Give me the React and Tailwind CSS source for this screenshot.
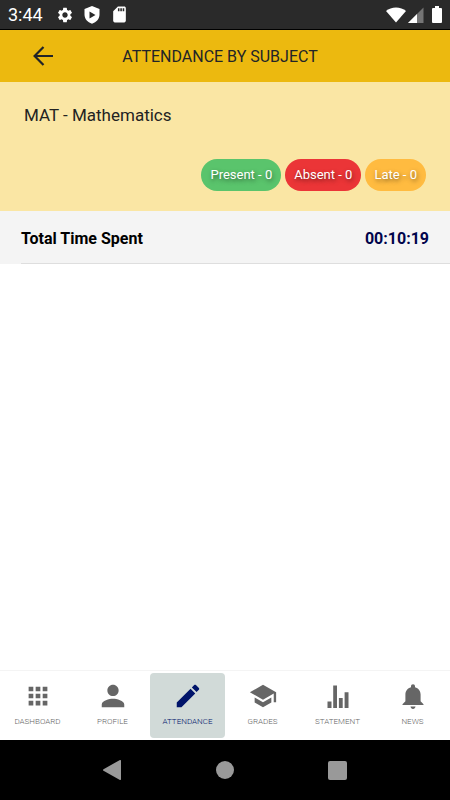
import React, { useState } from 'react';
import {
  IoMdApps,
  IoMdCreate,
  IoMdPerson,
  IoMdSchool,
} from 'react-icons/io';
import { MdSdCard, MdSettings } from 'react-icons/md';

const StatsIcon = ({ size }) => (
  <svg width={size} height={size} viewBox="0 0 30 30" fill="currentColor">
    <path d="M4.500 20.500h4V27h-4zM10.200 4.500h3.800V27h-3.800zM15.900 17h3.800v10h-3.800zM21.600 11.200h3.900V27h-3.900z" />
  </svg>
);

const BellIcon = ({ size }) => (
  <svg width={size} height={size} viewBox="0 0 30 30" fill="currentColor">
    <path d="M15 3.300c1.200 0 2 .9 2 2v.9c3.500.9 5.600 3.700 5.600 7.300v6.800l2.900 2.900v.8h-21v-.8l2.900-2.900v-6.800c0-3.600 2.100-6.400 5.600-7.300v-.9c0-1.100.8-2 2-2Z" />
    <path d="M12.500 25.600h5c-.2 1.500-1.200 2.400-2.500 2.400s-2.300-.9-2.500-2.400Z" />
  </svg>
);

const TABS = [
  { id: 'dashboard', label: 'DASHBOARD', Icon: IoMdApps },
  { id: 'profile', label: 'PROFILE', Icon: IoMdPerson },
  { id: 'attendance', label: 'ATTENDANCE', Icon: IoMdCreate },
  { id: 'grades', label: 'GRADES', Icon: IoMdSchool },
  { id: 'statement', label: 'STATEMENT', Icon: StatsIcon },
  { id: 'news', label: 'NEWS', Icon: BellIcon },
];

const COUNTS = [
  { label: 'Present', count: 0, color: 'bg-[#5ac46c]' },
  { label: 'Absent', count: 0, color: 'bg-[#eb3537]' },
  { label: 'Late', count: 0, color: 'bg-[#ffbb40]' },
];

const StatusBar = () => (
  <div className="flex h-[30px] items-center justify-between border-b border-black bg-[#2a2a2a] px-2 text-white">
    <div className="flex items-center">
      <span className="w-12 text-lg leading-none">3:44</span>
      <MdSettings size={18} />
      <svg className="ml-2 h-5 w-5" viewBox="0 0 20 20" fill="currentColor">
        <path fillRule="evenodd" d="M10 1 2.500 4v5.500c0 4.300 3 7.700 7.500 9.200 4.500-1.500 7.500-4.900 7.500-9.200V4L10 1Zm-2.500 5.500 6 3.500-6 3.500v-7Z" />
      </svg>
      <MdSdCard className="ml-2" size={19} />
    </div>
    <div className="flex items-center">
      <svg className="h-4 w-5" viewBox="0 0 20 16" fill="currentColor">
        <path d="M10 15.500 0 4C5-.7 15-.7 20 4L10 15.500Z" />
      </svg>
      <svg className="ml-0.5 h-4 w-4" viewBox="0 0 16 16" fill="currentColor">
        <path fill="#757575" d="M15.500.500V16H0L15.500.500Z" />
        <path d="M9 7v9H0l9-9Z" />
      </svg>
      <svg className="ml-2 h-[18px] w-[10px]" viewBox="0 0 10 18" fill="currentColor">
        <path d="M3 0h4v2h2a1 1 0 0 1 1 1v13a1 1 0 0 1-1 1H1a1 1 0 0 1-1-1V3a1 1 0 0 1 1-1h2V0Z" />
      </svg>
    </div>
  </div>
);

const Header = () => (
  <header className="grid h-[52px] grid-cols-[86px_1fr_96px] items-center bg-[#ecb90f] text-[#222428]">
    <button type="button" aria-label="Back" className="justify-self-center">
      <svg width="20" height="20" viewBox="0 0 20 20" fill="none" stroke="currentColor" strokeWidth="2.200">
        <path d="M10.500 1 1.600 10l8.900 9M1.600 10H20" />
      </svg>
    </button>
    <h1 className="pt-0.5 text-center text-base whitespace-nowrap">ATTENDANCE BY SUBJECT</h1>
  </header>
);

const Summary = () => (
  <section className="bg-[#fae6a4] px-6 pt-5 pb-5">
    <h2 className="text-[17px] leading-[26px] text-[#222]">MAT - Mathematics</h2>
    <div className="mt-[31px] flex justify-end gap-1">
      {COUNTS.map(({ label, count, color }) => (
        <span
          key={label}
          className={`flex h-8 items-center rounded-full px-[9px] text-[13px] text-white [text-shadow:1px_2px_4px_rgba(0,0,0,0.5)] ${color}`}
        >
          {label} - {count}
        </span>
      ))}
    </div>
  </section>
);

const TabBar = ({ active, onSelect }) => (
  <nav className="grid h-[70px] grid-cols-6 border-t border-[#f4f4f4] bg-white py-0.5">
    {TABS.map(({ id, label, Icon }) => (
      <button
        key={id}
        type="button"
        onClick={() => onSelect(id)}
        className={`flex flex-col items-center rounded-sm pt-2 ${
          active === id ? 'bg-[#d1dad8] text-[#00146a]' : 'text-[#666]'
        }`}
      >
        <Icon size={30} />
        <span className="mt-1 text-[8px] leading-[14px] font-light">{label}</span>
      </button>
    ))}
  </nav>
);

const SystemBar = () => (
  <div className="grid h-[60px] grid-cols-3 place-items-center bg-black px-14 text-[#999]">
    <button type="button" aria-label="System back">
      <svg className="h-5 w-5" viewBox="0 0 20 20" fill="currentColor">
        <path d="M19 1v18a1 1 0 0 1-1.500.800L1.500 10.800a1 1 0 0 1 0-1.600L17.500.200A1 1 0 0 1 19 1Z" />
      </svg>
    </button>
    <button type="button" aria-label="Home">
      <span className="block h-[18px] w-[18px] rounded-full bg-[#999]" />
    </button>
    <button type="button" aria-label="Recent apps">
      <span className="block h-[19px] w-[19px] rounded-xs bg-[#999]" />
    </button>
  </div>
);

function App() {
  const [activeTab, setActiveTab] = useState('attendance');

  return (
    <div className="flex min-h-screen flex-col bg-white font-[Roboto,sans-serif]">
      <StatusBar />
      <Header />
      <main className="flex-1">
        <Summary />
        <div className="bg-[#f4f4f4] pl-[21px]">
          <div className="flex h-[53px] items-center justify-between border-b border-[#dedede] pt-1 pr-[21px] text-base font-bold">
            <span className="text-black">Total Time Spent</span>
            <span className="text-[#00044c]">00:10:19</span>
          </div>
        </div>
      </main>
      <TabBar active={activeTab} onSelect={setActiveTab} />
      <SystemBar />
    </div>
  );
}

export default App;
